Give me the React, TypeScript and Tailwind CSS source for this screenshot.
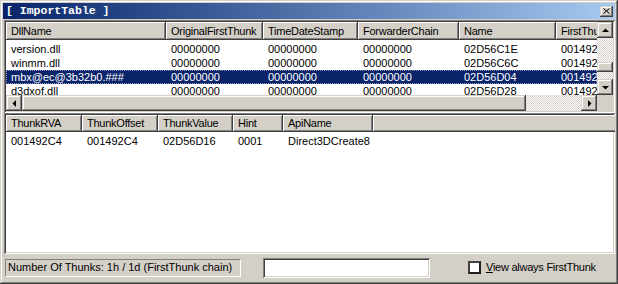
import React from "react";

interface Col {
    label: string;
    w: string;
}

const raised =
    "bg-[#d4d0c8] shadow-[inset_-1px_-1px_#404040,inset_1px_1px_#d4d0c8,inset_-2px_-2px_#808080,inset_2px_2px_#ffffff]";
const headRaised =
    "bg-[#d4d0c8] shadow-[inset_-1px_-1px_#404040,inset_1px_1px_#ffffff,inset_-2px_-2px_#808080]";
const sunken =
    "shadow-[inset_1px_1px_#808080,inset_-1px_-1px_#ffffff,inset_2px_2px_#404040,inset_-2px_-2px_#d4d0c8]";
const dither =
    "bg-[image:repeating-conic-gradient(#d4d0c8_0%_25%,#ffffff_0%_50%)] bg-[length:2px_2px]";

const topCols: Col[] = [
    { label: "DllName", w: "w-[160px]" },
    { label: "OriginalFirstThunk", w: "w-[97px]" },
    { label: "TimeDateStamp", w: "w-[95px]" },
    { label: "ForwarderChain", w: "w-[101px]" },
    { label: "Name", w: "w-[97px]" },
    { label: "FirstThunk", w: "w-[110px]" },
];

const topRows = [
    ["version.dll", "00000000", "00000000", "00000000", "02D56C1E", "00149200"],
    ["winmm.dll", "00000000", "00000000", "00000000", "02D56C6C", "00149208"],
    ["mbx@ec@3b32b0.###", "00000000", "00000000", "00000000", "02D56D04", "001492C4"],
    ["d3dxof.dll", "00000000", "00000000", "00000000", "02D56D28", "001492CC"],
];

const bottomCols: Col[] = [
    { label: "ThunkRVA", w: "w-[76px]" },
    { label: "ThunkOffset", w: "w-[76px]" },
    { label: "ThunkValue", w: "w-[75px]" },
    { label: "Hint", w: "w-[50px]" },
    { label: "ApiName", w: "w-[90px]" },
];

const bottomRows = [["001492C4", "001492C4", "02D56D16", "0001", "Direct3DCreate8"]];

function Arrow({ dir }: { dir: "up" | "down" | "left" | "right" }) {
    const pts = {
        up: "0,4 3.5,0.5 7,4",
        down: "0,0 7,0 3.5,3.5",
        left: "4,0 4,7 0.5,3.5",
        right: "0,0 0,7 3.5,3.5",
    }[dir];
    const vertical = dir === "up" || dir === "down";
    return (
        <svg width={vertical ? 7 : 4} height={vertical ? 4 : 7} className="block">
            <polygon points={pts} fill="#000" />
        </svg>
    );
}

function Header({ cols, h }: { cols: Col[]; h: string }) {
    return (
        <div className={`flex ${h} shrink-0 tracking-[-0.25px]`}>
            {cols.map((c) => (
                <div
                    key={c.label}
                    className={`${c.w} ${headRaised} shrink-0 h-full pl-[5px] flex items-center whitespace-nowrap overflow-hidden`}
                >
                    {c.label}
                </div>
            ))}
            <div className={`flex-1 min-w-[300px] h-full ${headRaised}`}></div>
        </div>
    );
}

function Rows({ cols, rows, selected }: { cols: Col[]; rows: string[][]; selected?: number }) {
    return (
        <div className="pt-[2px] flex flex-col">
            {rows.map((r, i) => (
                <div
                    key={i}
                    className={
                        i === selected
                            ? "flex h-[14px] items-center bg-[#0a246a] text-white outline-1 outline-dotted outline-[#8c95bd] -outline-offset-1"
                            : "flex h-[14px] items-center"
                    }
                >
                    {r.map((v, j) => (
                        <div key={j} className={`${cols[j].w} shrink-0 pl-[5px] whitespace-nowrap overflow-hidden`}>
                            {v}
                        </div>
                    ))}
                </div>
            ))}
        </div>
    );
}

export default function App() {
    return (
        <div className="w-[618px] h-[284px] bg-[#d4d0c8] shadow-[inset_-1px_-1px_#404040,inset_1px_1px_#d4d0c8,inset_-2px_-2px_#808080,inset_2px_2px_#ffffff] pt-[3px] pl-[3px] pr-[3px] flex flex-col text-[11px] leading-[13px] text-black font-['Liberation_Sans',Arial,sans-serif] overflow-hidden">
            {/* Title bar */}
            <div className="h-[16px] shrink-0 flex items-center justify-between bg-linear-to-r from-[#0a246a] to-[#a6caf0] pl-[3px] pr-[2px]">
                <span className="font-['Liberation_Mono',monospace] font-bold text-white text-[11.5px] leading-none whitespace-pre">
                    [ ImportTable ]
                </span>
                <div className={`w-[13px] h-[11px] ${raised} flex items-center justify-center`}>
                    <svg width="7" height="6" className="block">
                        <path d="M0.5 0.5 L6.5 5.5 M6.5 0.5 L0.5 5.5" stroke="#000" strokeWidth="1" />
                    </svg>
                </div>
            </div>

            {/* Import table list */}
            <div className={`mt-[1px] ml-[1px] h-[93px] shrink-0 bg-white p-[2px] ${sunken} flex`}>
                <div className="w-[591px] flex flex-col overflow-hidden">
                    <Header cols={topCols} h="h-[18px]" />
                    <div className="h-[55px] overflow-hidden shrink-0">
                        <Rows cols={topCols} rows={topRows} selected={2} />
                    </div>
                    <div className="h-[16px] shrink-0 flex">
                        <div className={`w-[16px] h-full ${raised} flex items-center justify-center pr-[1px]`}>
                            <Arrow dir="left" />
                        </div>
                        <div className={`flex-1 h-full ${dither} flex`}>
                            <div className={`w-[504px] h-full ${raised}`}></div>
                        </div>
                        <div className={`w-[16px] h-full ${raised} flex items-center justify-center pl-[1px]`}>
                            <Arrow dir="right" />
                        </div>
                    </div>
                </div>
                <div className="w-[16px] flex flex-col">
                    <div className={`h-[16px] shrink-0 ${raised} flex items-center justify-center pb-[1px]`}>
                        <Arrow dir="up" />
                    </div>
                    <div className={`flex-1 ${dither} flex flex-col`}>
                        <div className="h-[24px]"></div>
                        <div className={`h-[10px] ${raised}`}></div>
                    </div>
                    <div className={`h-[16px] shrink-0 ${raised} flex items-center justify-center pt-[1px]`}>
                        <Arrow dir="down" />
                    </div>
                    <div className="h-[16px] shrink-0 bg-[#d4d0c8]"></div>
                </div>
            </div>

            {/* Thunk list */}
            <div className={`ml-[1px] h-[141px] shrink-0 bg-white p-[2px] ${sunken} flex flex-col overflow-hidden`}>
                <Header cols={bottomCols} h="h-[17px]" />
                <Rows cols={bottomCols} rows={bottomRows} />
            </div>

            {/* Status bar */}
            <div className="h-[27px] shrink-0 flex items-center">
                <div className="ml-[2px] w-[236px] h-[18px] border border-t-[#808080] border-l-[#808080] border-b-white border-r-white pl-[2px] flex items-center whitespace-nowrap">
                    Number Of Thunks: 1h / 1d (FirstThunk chain)
                </div>
                <div className={`ml-[22px] w-[167px] h-[20px] bg-white ${sunken}`}></div>
                <div className="ml-[38px] w-[13px] h-[13px] bg-white border-2 border-t-[#404040] border-l-[#404040] border-b-[#202020] border-r-[#202020]"></div>
                <span className="ml-[5px] whitespace-nowrap tracking-[-0.25px]">
                    <span className="underline">V</span>iew always FirstThunk
                </span>
            </div>
        </div>
    );
}
